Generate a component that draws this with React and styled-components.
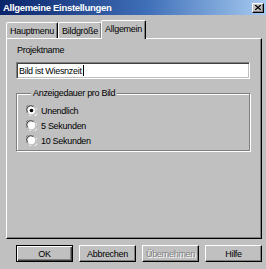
import React from 'react';
import styled, { createGlobalStyle } from 'styled-components';

const GlobalStyle = createGlobalStyle`
  html, body {
    margin: 0;
    padding: 0;
    background: #c0c0c0;
  }
  body {
    font-family: "Liberation Sans", Arial, sans-serif;
    font-size: 9px;
    letter-spacing: -0.3px;
    color: #000;
  }
`;

const Window = styled.div`
  width: 266px;
  height: 269px;
  background: #c0c0c0;
  display: flex;
  flex-direction: column;
  overflow: hidden;
`;

const TitleBar = styled.div`
  height: 15px;
  flex: none;
  display: flex;
  align-items: center;
  justify-content: space-between;
  padding: 0 2px 0 3px;
  background: linear-gradient(to right, #0a246a, #3f6fb8 55%, #a6caf0);
`;

const Title = styled.span`
  color: #fff;
  font-weight: bold;
  font-size: 9.5px;
  line-height: 15px;
`;

const CloseButton = styled.div`
  width: 12px;
  height: 10px;
  box-sizing: border-box;
  background: #c0c0c0;
  border: 1px solid;
  border-color: #fff #000 #000 #fff;
  box-shadow: inset -1px -1px 0 #808080;
  display: flex;
  align-items: center;
  justify-content: center;
`;

const Body = styled.div`
  padding: 5px 4px 0 6px;
  display: flex;
  flex-direction: column;
`;

const TabRow = styled.div`
  height: 18px;
  display: flex;
  align-items: flex-end;
`;

const Tab = styled.div`
  box-sizing: border-box;
  width: ${p => p.$width}px;
  height: ${p => (p.$active ? 19 : 16)}px;
  margin: 0 0 ${p => (p.$active ? -1 : 0)}px ${p => (p.$active ? -1 : 0)}px;
  position: relative;
  z-index: ${p => (p.$active ? 1 : 0)};
  background: #c0c0c0;
  border: 1px solid;
  border-bottom: none;
  border-color: #fff #000 #000 #fff;
  border-radius: 2px 2px 0 0;
  box-shadow: inset -1px 0 0 #808080;
  display: flex;
  align-items: ${p => (p.$active ? 'flex-start' : 'center')};
  padding-top: ${p => (p.$active ? 3 : 0)}px;
  justify-content: center;
  white-space: nowrap;
`;

const Panel = styled.div`
  box-sizing: border-box;
  width: 256px;
  height: 201px;
  border: 1px solid;
  border-color: #fff #000 #000 #fff;
  box-shadow: inset -1px -1px 0 #808080;
  padding: 6px 11px 0 9px;
  display: flex;
  flex-direction: column;
`;

const Label = styled.div`
  height: 11px;
  line-height: 11px;
  margin-left: 1px;
`;

const TextField = styled.div`
  box-sizing: border-box;
  margin-top: 6px;
  height: 17px;
  background: #fff;
  border: 1px solid;
  border-color: #808080 #fff #fff #808080;
  box-shadow: inset 1px 1px 0 #404040, inset -1px -1px 0 #c0c0c0;
  display: flex;
  align-items: center;
  padding: 0 2px;
`;

const Caret = styled.span`
  display: inline-block;
  width: 1px;
  height: 11px;
  background: #000;
  margin-left: 1px;
`;

const GroupBox = styled.fieldset`
  margin: 8px 0 0;
  padding: 5px 0 3px 9px;
  min-width: 0;
  border: 1px solid #808080;
  box-shadow: 1px 1px 0 #fff, inset 1px 1px 0 #fff;
  display: flex;
  flex-direction: column;
  gap: 2px;
`;

const Legend = styled.legend`
  margin-left: 5px;
  padding: 0 2px;
  height: 12px;
  line-height: 12px;
  background: #c0c0c0;
`;

const RadioRow = styled.label`
  height: 13px;
  display: flex;
  align-items: center;
  gap: 4px;
`;

const ButtonRow = styled.div`
  margin-top: 6px;
  padding-left: 10px;
  display: flex;
  gap: 6px;
`;

const Button = styled.div`
  box-sizing: border-box;
  width: 57px;
  height: 17px;
  background: #c0c0c0;
  border: 1px solid;
  border-color: ${p => (p.$default ? '#000' : '#fff #000 #000 #fff')};
  box-shadow: ${p =>
    p.$default
      ? 'inset 1px 1px 0 #fff, inset -1px -1px 0 #404040, inset -2px -2px 0 #808080'
      : 'inset -1px -1px 0 #808080'};
  display: flex;
  align-items: center;
  justify-content: center;
  white-space: nowrap;
  color: ${p => (p.$disabled ? '#808080' : '#000')};
  text-shadow: ${p => (p.$disabled ? '1px 1px 0 #fff' : 'none')};
`;

const Radio = ({ checked }) => (
  <svg width="11" height="11" viewBox="0 0 12 12">
    <path d="M1 8.5A5 5 0 0 1 8.5 1" stroke="#808080" fill="none" />
    <path d="M2 8A4 4 0 0 1 8 2" stroke="#404040" fill="none" />
    <circle cx="6" cy="6" r="4" fill="#fff" />
    <path d="M3.5 11A5 5 0 0 0 11 3.5" stroke="#fff" fill="none" />
    {checked && <circle cx="6" cy="6" r="2" fill="#000" />}
  </svg>
);

const tabs = [
  { label: 'Hauptmenu', width: 52 },
  { label: 'Bildgröße', width: 44 },
  { label: 'Allgemein', width: 45, active: true },
];

const options = ['Unendlich', '5 Sekunden', '10 Sekunden'];

export default function App() {
  return (
    <>
      <GlobalStyle />
      <Window>
        <TitleBar>
          <Title>Allgemeine Einstellungen</Title>
          <CloseButton>
            <svg width="6" height="5" viewBox="0 0 6 5">
              <path d="M0 0L6 5M6 0L0 5" stroke="#000" strokeWidth="1.3" />
            </svg>
          </CloseButton>
        </TitleBar>
        <Body>
          <TabRow>
            {tabs.map(t => (
              <Tab key={t.label} $width={t.width} $active={t.active}>
                {t.label}
              </Tab>
            ))}
          </TabRow>
          <Panel>
            <Label>Projektname</Label>
            <TextField>
              Bild ist Wiesnzeit<Caret />
            </TextField>
            <GroupBox>
              <Legend>Anzeigedauer pro Bild</Legend>
              {options.map((o, i) => (
                <RadioRow key={o}>
                  <Radio checked={i === 0} />
                  {o}
                </RadioRow>
              ))}
            </GroupBox>
          </Panel>
          <ButtonRow>
            <Button $default>OK</Button>
            <Button>Abbrechen</Button>
            <Button $disabled>Übernehmen</Button>
            <Button>Hilfe</Button>
          </ButtonRow>
        </Body>
      </Window>
    </>
  );
}
